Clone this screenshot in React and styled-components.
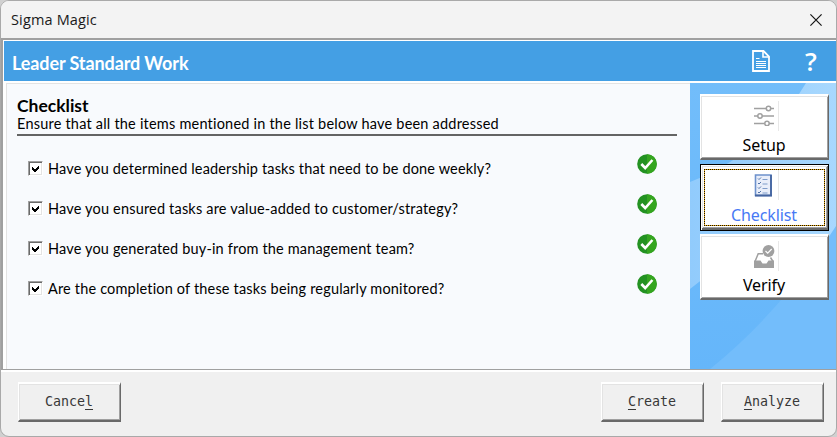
import React from 'react'
import styled, { createGlobalStyle } from 'styled-components'

const GlobalStyle = createGlobalStyle`
* {
box-sizing: border-box;
}
body {
margin: 0;
background: #d0d0d0;
overflow: hidden;
}
button {
margin: 0;
padding: 0;
border-radius: 0;
}
`

const Dialog = styled.div`
width: 837px;
height: 437px;
display: flex;
flex-direction: column;
border: 1px solid #a9a9a9;
border-radius: 9px;
background: #f0f0f0;
overflow: hidden;
`

const TitleBar = styled.header`
height: 37px;
flex: none;
display: flex;
justify-content: space-between;
align-items: center;
padding: 0 14px 0 10px;
background: #f3f3f3;
color: #1a1a1a;
font-family: 'Open Sans', sans-serif;
font-size: 14.5px;
letter-spacing: 0.15px;
`

const Frame = styled.main`
height: 332px;
flex: none;
display: flex;
flex-direction: column;
border-top: 2px solid #a0a0a0;
border-left: 2px solid #a0a0a0;
border-bottom: 1px solid #a0a0a0;
padding: 1px 0 0 1px;
background: white;
`

const Banner = styled.div`
height: 40px;
flex: none;
display: flex;
align-items: center;
padding: 2px 18px 0 8px;
background: #449fe4;
color: white;
`

const BannerTitle = styled.h1`
flex: 1;
margin: 1px 0 0;
font-family: Lato, sans-serif;
font-size: 18px;
font-weight: 700;
line-height: 22px;
letter-spacing: -0.1px;
`

const HelpMark = styled.span`
width: 14px;
margin-left: 34px;
margin-top: -2px;
font-family: 'Open Sans', sans-serif;
font-size: 26px;
font-weight: 600;
line-height: 30px;
text-align: center;
`

const Body = styled.div`
flex: 1;
display: flex;
margin-top: 2px;
`

const Content = styled.section`
width: 684px;
flex: none;
margin-left: 2px;
padding: 12px 13px 0 10px;
border-top: 1px solid #e3e3e3;
border-left: 1px solid #e3e3e3;
background: #f8fafd;
color: black;
font-family: Lato, sans-serif;
font-size: 14.5px;
font-variant-ligatures: none;
`

const Heading = styled.h2`
margin: 0;
font-size: 17.5px;
font-weight: 700;
line-height: 20px;
letter-spacing: 0;
`

const Hint = styled.p`
height: 20px;
margin: 0 0 13px;
border-bottom: 2px solid #646464;
line-height: 16px;
letter-spacing: 0.21px;
`

const Row = styled.label`
height: 40px;
display: flex;
align-items: center;
padding: 0 20px 1px 11px;
`

const Question = styled.span`
flex: 1;
margin-left: 5px;
white-space: nowrap;
letter-spacing: ${(props) => props.$spacing};
`

const Box = styled.span`
width: 15px;
height: 15px;
display: flex;
justify-content: center;
align-items: center;
border: 1px solid;
border-color: #a0a0a0 white white #a0a0a0;
box-shadow: inset 1px 1px #696969, inset -1px -1px #e3e3e3;
background: white;
`

const Done = styled.span`
height: 29px;
`

const Sidebar = styled.nav`
position: relative;
flex: 1;
display: flex;
flex-direction: column;
gap: 4px;
padding: 11px 7px 0 10px;
background: #72bdfb;
`

const Backdrop = styled.svg`
position: absolute;
top: 0;
left: 0;
width: 100%;
height: 100%;
`

const Raised = styled.button`
border-style: solid;
border-width: 2px 1px 2px 1px;
border-color: white #696969 #696969 white;
box-shadow: inset 1px 1px #e3e3e3, inset -1px -1px #a0a0a0;
`

const Tab = styled(Raised)`
position: relative;
width: 129px;
height: ${(props) => (props.$active ? '67px' : '66px')};
margin-bottom: ${(props) => (props.$active ? '-1px' : '0')};
display: flex;
flex-direction: column;
align-items: center;
justify-content: flex-start;
padding: 5px 1px 0 0;
background: white;
color: ${(props) => (props.$active ? '#4779f5' : 'black')};
font-family: 'Noto Sans', sans-serif;
font-size: 16px;
line-height: 22px;
letter-spacing: -0.1px;
${(props) =>
    props.$active &&
    `
border: 1px solid black;
box-shadow: inset 1px 1px white, inset -1px -2px #696969, inset 2px 2px #e3e3e3, inset -2px -3px #a0a0a0;
`}
`

const FocusRing = styled.span`
position: absolute;
top: 4px;
left: 3px;
right: 3px;
bottom: 4px;
border: 1px dotted #191000;
background: linear-gradient(white, white) padding-box, #e7a912 border-box;
`

const TabIcon = styled.span`
position: relative;
width: 29px;
height: 30px;
display: flex;
padding: 4px 0 0 4px;
margin-bottom: ${(props) => props.$gap};
border-right: 1px solid #e8e8e8;
`

const TabLabel = styled.span`
position: relative;
`

const Footer = styled.footer`
flex: 1;
display: flex;
gap: 17px;
padding: 10px 12px 0 17px;
border-top: 2px solid white;
`

const Action = styled(Raised)`
width: 103px;
height: 40px;
padding: 0 1px 1px 0;
margin-right: ${(props) => (props.$push ? 'auto' : '0')};
background: #f0f0f0;
color: #383838;
font-family: 'DejaVu Sans Mono', monospace;
font-size: 13.3px;
u {
  text-underline-offset: 3px;
}
`

const questions = [
  { text: 'Have you determined leadership tasks that need to be done weekly?', spacing: '0.15px' },
  { text: 'Have you ensured tasks are value-added to customer/strategy?', spacing: '0.18px' },
  { text: 'Have you generated buy-in from the management team?', spacing: '0.16px' },
  { text: 'Are the completion of these tasks being regularly monitored?', spacing: '0.17px' },
]

const CloseIcon = () => (
  <svg width="12" height="12" viewBox="0 0 12 12" fill="none" stroke="#161616" strokeWidth="1.2">
    <path d="M.4.4l11.2 11.2M11.6.4L.4 11.6" />
  </svg>
)

const DocumentSvg = styled.svg`
margin-bottom: 3px;
`

const DocumentIcon = () => (
  <DocumentSvg width="18" height="22" viewBox="0 0 18 22" fill="none" stroke="white">
    <path d="M1 1h10.5L17 6.500V21H1z" strokeWidth="1.8" />
    <path d="M11 1v6h6" strokeWidth="1.6" />
    <path d="M4 8.500h3.500M4 11.500h10M4 13.500h10M4 15.500h10M4 17.500h10" />
  </DocumentSvg>
)

const CheckMark = () => (
  <svg width="9" height="9" viewBox="0 0 9 9" shapeRendering="crispEdges">
    <path d="M1 3v3l2 2h1l4-4V1L4 5H3z" fill="black" />
  </svg>
)

const DoneIcon = () => (
  <svg width="20" height="20" viewBox="0 0 20 20">
    <circle cx="10" cy="10" r="9.800" fill="#239222" />
    <path d="M10 .2a9.800 9.800 0 0 1 0 19.600z" fill="#35a51f" />
    <path d="M4.300 10l3.900 4 7.200-8" fill="none" stroke="white" strokeWidth="2.600" />
  </svg>
)

const SlidersIcon = () => (
  <svg width="21" height="21" viewBox="0 0 21 21" fill="white" stroke="#a0a0a0" strokeWidth="1.500">
    <path d="M0 3.500h20M0 11h20M0 18.500h20" />
    <circle cx="14.500" cy="3.500" r="2.200" />
    <circle cx="6" cy="11" r="2.200" />
    <circle cx="13" cy="18.500" r="2.200" />
  </svg>
)

const ListIcon = () => (
  <svg width="19" height="23" viewBox="0 0 19 23" fill="none">
    <path d="M1.500 1h15.500v20.500H1.500z" fill="#e9eefa" stroke="#6d91cc" strokeWidth="1.600" />
    <path d="M1 21.500h17M17 1v21" stroke="#4565a0" strokeWidth="1.800" />
    <path d="M4 4.500l1 1 2-2M4 9l1 1 2-2M4 13.500l1 1 2-2M4 18l1 1 2-2" stroke="#5274a9" />
    <path d="M8.500 5.500h5M8.500 10h5M8.500 14.500h5M8.500 19h5" stroke="#7f9cca" strokeWidth="1.200" />
  </svg>
)

const VerifyIcon = () => (
  <svg width="21" height="23" viewBox="0 0 21 23" fill="#a0a0a0">
    <path d="M0 15.500h6.500l2 3h4l2-3H20V23H0z" />
    <path d="M1.200 16l3-7.200H9M16.500 12.500l2.500 4" fill="none" stroke="#a0a0a0" strokeWidth="1.500" />
    <circle cx="14.500" cy="6" r="5.900" />
    <path d="M11.500 6l2.200 2.200 4-4.200" fill="none" stroke="white" strokeWidth="1.200" />
  </svg>
)

const App = () => {
  return (
    <>
      <GlobalStyle />
      <Dialog>
        <TitleBar>
          <span>Sigma Magic</span>
          <CloseIcon />
        </TitleBar>
        <Frame>
          <Banner>
            <BannerTitle>Leader Standard Work</BannerTitle>
            <DocumentIcon />
            <HelpMark>?</HelpMark>
          </Banner>
          <Body>
            <Content>
              <Heading>Checklist</Heading>
              <Hint>Ensure that all the items mentioned in the list below have been addressed</Hint>
              {questions.map((q) => (
                <Row key={q.text}>
                  <Box><CheckMark /></Box>
                  <Question $spacing={q.spacing}>{q.text}</Question>
                  <Done><DoneIcon /></Done>
                </Row>
              ))}
            </Content>
            <Sidebar>
              <Backdrop viewBox="0 0 146 286" preserveAspectRatio="none">
                <defs>
                  <linearGradient id="sky" x1="0" y1="0" x2="0" y2="1">
                    <stop offset="0" stopColor="#72bdfa" />
                    <stop offset="1" stopColor="#65b6fa" />
                  </linearGradient>
                  <linearGradient id="glow" x1="0" y1="0" x2="1" y2="0">
                    <stop offset="0" stopColor="#91cbfc" />
                    <stop offset="1" stopColor="#a8d8fe" />
                  </linearGradient>
                </defs>
                <path d="M0 0h146v286H0z" fill="url(#sky)" />
                <path d="M0 99Q75 70 116 0H146V155Q60 155 0 206z" fill="url(#glow)" />
                <path d="M146 143Q90 230 20 286H146z" fill="#73bdfb" />
              </Backdrop>
              <Tab>
                <TabIcon $gap="3px"><SlidersIcon /></TabIcon>
                <TabLabel>Setup</TabLabel>
              </Tab>
              <Tab $active>
                <FocusRing />
                <TabIcon $gap="4px"><ListIcon /></TabIcon>
                <TabLabel>Checklist</TabLabel>
              </Tab>
              <Tab>
                <TabIcon $gap="3px"><VerifyIcon /></TabIcon>
                <TabLabel>Verify</TabLabel>
              </Tab>
            </Sidebar>
          </Body>
        </Frame>
        <Footer>
          <Action $push>Cance<u>l</u></Action>
          <Action><u>C</u>reate</Action>
          <Action><u>A</u>nalyze</Action>
        </Footer>
      </Dialog>
    </>
  )
}

export default App
